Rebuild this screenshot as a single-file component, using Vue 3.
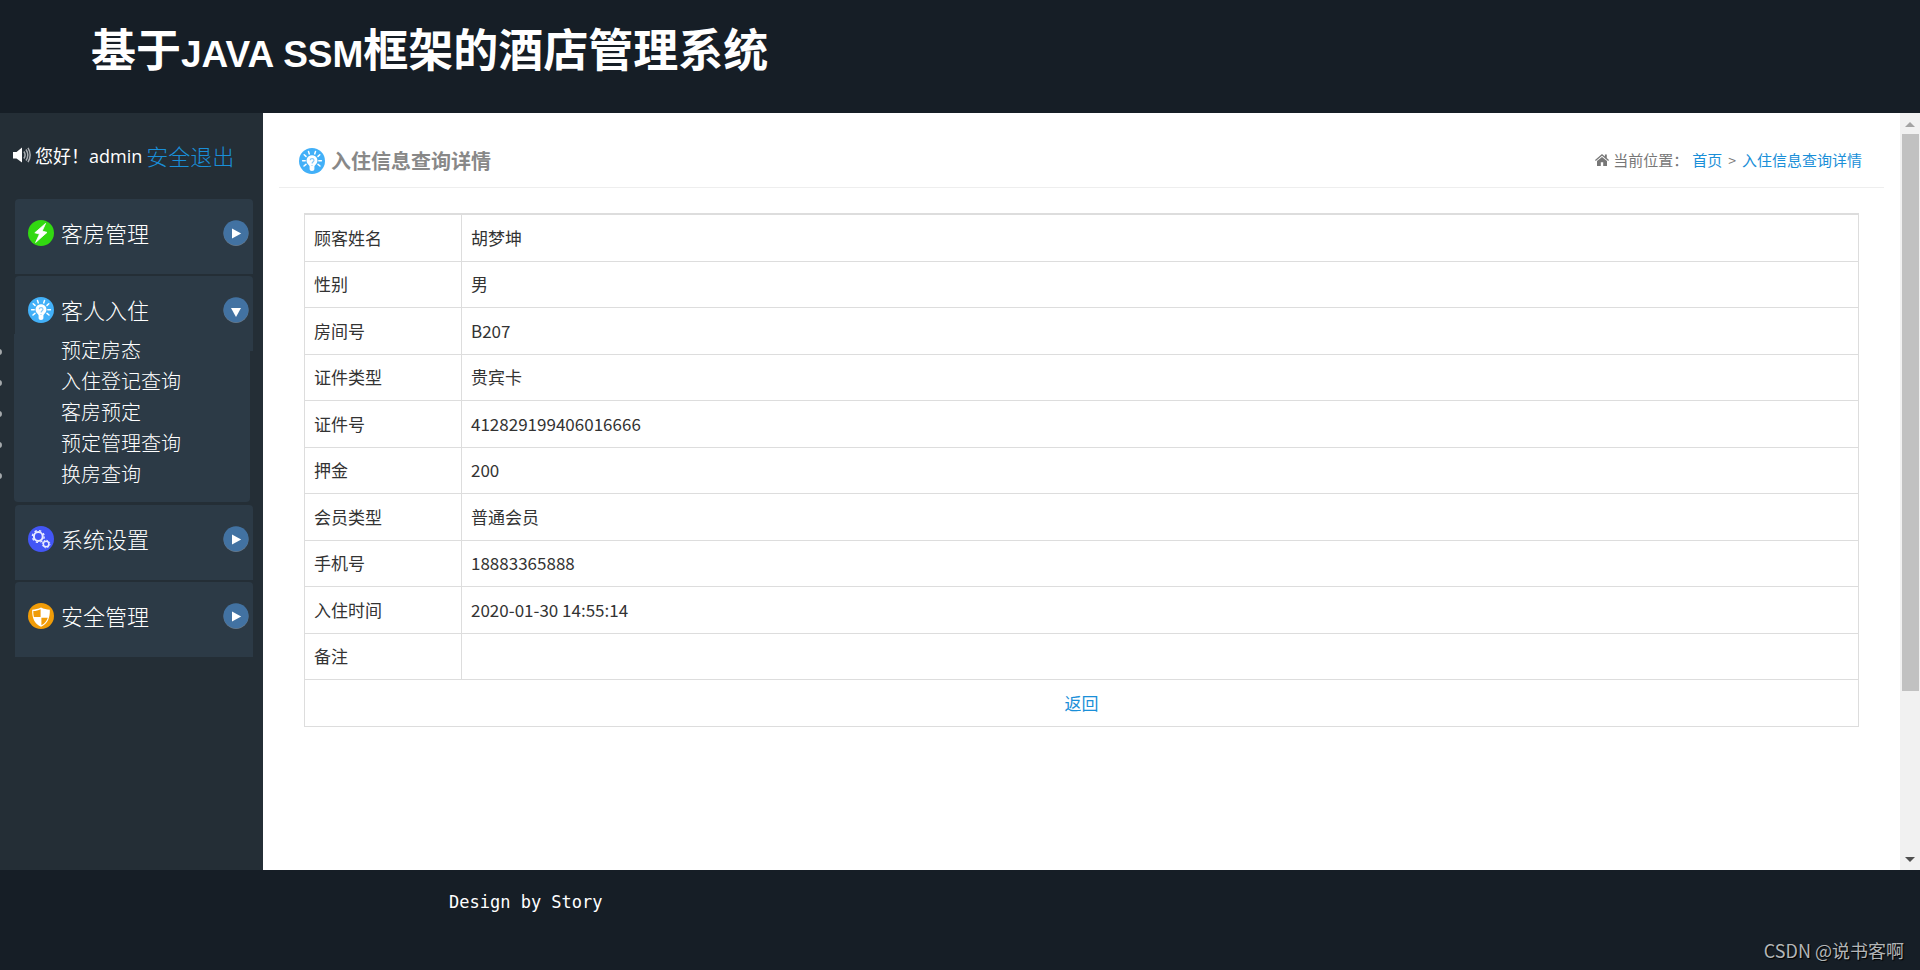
<script setup>
import { ref } from 'vue'

const open = ref('guest')

const menus = [
  { id: 'room', label: '客房管理', icon: 'bolt', children: [] },
  {
    id: 'guest',
    label: '客人入住',
    icon: 'bulb',
    children: ['预定房态', '入住登记查询', '客房预定', '预定管理查询', '换房查询'],
  },
  { id: 'system', label: '系统设置', icon: 'gears', children: [] },
  { id: 'security', label: '安全管理', icon: 'shield', children: [] },
]

const rows = [
  ['顾客姓名', '胡梦坤'],
  ['性别', '男'],
  ['房间号', 'B207'],
  ['证件类型', '贵宾卡'],
  ['证件号', '412829199406016666'],
  ['押金', '200'],
  ['会员类型', '普通会员'],
  ['手机号', '18883365888'],
  ['入住时间', '2020-01-30 14:55:14'],
  ['备注', ''],
]

const toggle = (id) => {
  open.value = open.value === id ? '' : id
}
</script>

<template>
  <div class="page">
    <svg class="defs" aria-hidden="true">
      <symbol id="i-bolt" viewBox="0 0 26 26">
        <circle cx="13" cy="13" r="13" fill="#32d911" />
        <path d="M17.600 3.400 6.800 12.800l4.700 1.300-3.900 8.400L19 12.400l-4.800-1.400z" fill="#fff" stroke="#fff" stroke-width=".8" stroke-linejoin="round" />
      </symbol>
      <symbol id="i-bulb" viewBox="0 0 26 26">
        <circle cx="13" cy="13" r="13" fill="#42b0f8" />
        <path d="M13 7.200a5.400 5.400 0 0 0-3.300 9.700c.7.6.9 1.100.9 1.900V21c0 1.200.9 2 2.400 2s2.400-.8 2.400-2v-2.200c0-.8.2-1.300.9-1.900A5.400 5.400 0 0 0 13 7.200z" fill="#fff" />
        <path d="M11.200 12.200c0-2.200 3.800-2.200 3.800 0 0 1.700-1.900 1.400-1.900 3.400M13 17.300v.8" fill="none" stroke="#86caf8" stroke-width="1.200" />
        <path d="M10.300 5.900 9.500 3.500M15.700 5.900l.8-2.400M7 8.400 5.200 6.800M19 8.400l1.800-1.600M6.200 12.800H3.600M19.800 12.800h2.600M7 16.400l-2 1.600M19 16.400l2 1.600" stroke="#fff" stroke-width="1.500" stroke-linecap="round" />
      </symbol>
      <symbol id="i-gears" viewBox="0 0 26 26">
        <circle cx="13" cy="13" r="13" fill="#4356f6" />
        <circle cx="10.300" cy="10.500" r="4.400" fill="none" stroke="#e9ebff" stroke-width="2" />
        <circle cx="10.300" cy="10.500" r="5.900" fill="none" stroke="#e9ebff" stroke-width="1.400" stroke-dasharray="2.320 2.320" />
        <circle cx="18.100" cy="18" r="2.800" fill="none" stroke="#e9ebff" stroke-width="1.500" />
        <circle cx="18.100" cy="18" r="3.800" fill="none" stroke="#e9ebff" stroke-width="1" stroke-dasharray="1.490 1.490" />
      </symbol>
      <symbol id="i-shield" viewBox="0 0 26 26">
        <circle cx="13" cy="13" r="13" fill="#f09c08" />
        <path d="M13 4.600c2.800 1.500 5.700 2.100 8.800 2.100.4 7.700-2.300 14.300-8.800 17-6.500-2.700-9.200-9.300-8.800-17 3.100 0 6-.6 8.800-2.100z" fill="#fff" />
        <path d="M12.600 6.200v7.900H5.900c-.5-1.900-.7-4.200-.6-6.100 2.600 0 5-.6 7.300-1.800zM13.400 14.700h6.400c-1.200 3.400-3.200 6-6.400 7.600z" fill="#f09c08" />
      </symbol>
    </svg>

    <header class="header">
      <h1 class="title">基于<span class="latin">JAVA SSM</span>框架的酒店管理系统</h1>
    </header>

    <div class="body">
      <aside class="sidebar">
        <div class="welcome">
          <svg class="sound" viewBox="0 0 18 16" aria-hidden="true">
            <path d="M0 5h3.500L9 .4v15.200L3.500 11.500H0z" fill="#fff" />
            <path d="M10.900 4.500q2.400 3.500 0 7M13 2.500q3.600 5.500 0 11M15 .8q4.300 7.200 0 14.400" fill="none" stroke="#a9adb1" stroke-width="1.500" />
          </svg>
          <span class="hello">您好！admin</span>
          <a class="logout" href="#">安全退出</a>
        </div>

        <nav class="menu">
          <section v-for="m in menus" :key="m.id" class="group">
            <button class="group-title" type="button" :aria-expanded="open === m.id" @click="toggle(m.id)">
              <svg class="icon" aria-hidden="true"><use :href="'#i-' + m.icon" /></svg>
              <span class="group-label">{{ m.label }}</span>
              <svg class="icon" viewBox="0 0 26 26" aria-hidden="true">
                <circle cx="13" cy="13.500" r="12.500" fill="#68798a" />
                <circle cx="13" cy="12.700" r="12.500" fill="#4272a2" />
                <path v-if="open === m.id" d="M8 11h10l-5 9z" fill="#fff" />
                <path v-else d="M9 8.500 18.200 13.500 9 18.500z" fill="#fff" />
              </svg>
            </button>
            <ul v-if="open === m.id && m.children.length" class="submenu">
              <li v-for="c in m.children" :key="c"><a href="#">{{ c }}</a></li>
            </ul>
          </section>
        </nav>
      </aside>

      <main class="content">
        <div class="content-head">
          <h2 class="heading">
            <svg class="icon" aria-hidden="true"><use href="#i-bulb" /></svg>
            入住信息查询详情
          </h2>
          <div class="crumbs">
            <svg class="home" viewBox="0 0 14 12" aria-hidden="true">
              <path d="M7 0 0 6l.8 1L7 1.800 13.200 7l.8-1-2.200-1.900V.6H9.900v1.900z" fill="#777" />
              <path d="M7 2.900 2 7.100V12h3.800V8.300h2.400V12H12V7.100z" fill="#777" />
            </svg>
            <span>当前位置：</span>
            <a href="#">首页</a>
            <span class="sep">&gt;</span>
            <a href="#">入住信息查询详情</a>
          </div>
        </div>

        <table class="detail">
          <tbody>
            <tr v-for="r in rows" :key="r[0]">
              <th scope="row">{{ r[0] }}</th>
              <td>{{ r[1] }}</td>
            </tr>
            <tr>
              <td class="back" colspan="2"><a href="#">返回</a></td>
            </tr>
          </tbody>
        </table>
      </main>

      <div class="scrollbar" aria-hidden="true">
        <span class="arrow up"></span>
        <div class="track"><div class="thumb"></div></div>
        <span class="arrow down"></span>
      </div>
    </div>

    <footer class="footer">
      <p class="design">Design by Story</p>
      <p class="mark">CSDN @说书客啊</p>
    </footer>
  </div>
</template>

<style>
body {
  margin: 0;
  background: #161e26;
}
</style>

<style scoped>
.page {
  display: flex;
  flex-direction: column;
  min-height: 100vh;
  font-family: "Noto Sans CJK SC", sans-serif;
  font-size: 17px;
  color: #333;
  background: #161e26;
}
.defs {
  position: absolute;
  width: 0;
  height: 0;
}
a {
  color: #1a8fd8;
  text-decoration: none;
}
.header {
  height: 113px;
  padding-left: 91px;
  box-sizing: border-box;
}
.title {
  margin: 0;
  padding-top: 16px;
  font-size: 45px;
  line-height: 64px;
  font-weight: 700;
  color: #fff;
}
.latin {
  font-family: "Liberation Sans", sans-serif;
  font-size: 37px;
}
.body {
  flex: 1;
  display: flex;
}
.sidebar {
  width: 263px;
  flex: none;
  box-sizing: border-box;
  padding: 26px 10px 0 15px;
  background: #242e36;
  color: #fff;
}
.welcome {
  display: flex;
  align-items: center;
  height: 32px;
  margin-left: -2px;
}
.sound {
  width: 18px;
  height: 16px;
  margin-right: 4px;
}
.hello {
  font-family: "Open Sans", "Noto Sans CJK SC", sans-serif;
  font-size: 18px;
}
.logout {
  margin-left: 4px;
  font-size: 22px;
  font-weight: 300;
  line-height: 32px;
}
.menu {
  display: flex;
  flex-direction: column;
  gap: 2px;
  margin-top: 28px;
}
.group-title {
  display: flex;
  align-items: flex-start;
  width: 100%;
  height: 75px;
  padding: 21px 4px 0 13px;
  border: 0;
  border-radius: 4px 4px 0 0;
  background: #2c3a46;
  color: #fff;
  font-family: inherit;
  font-size: 22px;
  font-weight: 300;
  line-height: 24px;
  text-align: left;
  cursor: pointer;
}
.icon {
  width: 26px;
  height: 26px;
  flex: none;
}
.group-label {
  flex: 1;
  margin-left: 7px;
}
.submenu {
  margin: -17px 3px 1px -1px;
  padding: 0 0 13px 47px;
  border-radius: 0 0 4px 4px;
  background: #2c3a46;
  list-style: none;
  position: relative;
}
.submenu li {
  font-size: 20px;
  font-weight: 300;
  line-height: 31px;
}
.submenu li::before {
  content: "";
  position: absolute;
  left: -18px;
  width: 6px;
  height: 6px;
  margin-top: 15px;
  border-radius: 50%;
  background: #a5a9ac;
}
.submenu a {
  color: #fff;
}
.content {
  flex: 1;
  min-width: 0;
  padding: 21px 16px 0;
  background: #fff;
}
.content-head {
  display: flex;
  justify-content: space-between;
  align-items: center;
  height: 53px;
  padding: 0 22px 0 20px;
  border-bottom: 1px solid #eee;
}
.heading {
  display: flex;
  align-items: center;
  gap: 6px;
  margin: 0;
  font-size: 20px;
  font-weight: 700;
  color: #888;
}
.crumbs {
  display: flex;
  align-items: center;
  padding-bottom: 2px;
  font-size: 15px;
  color: #777;
}
.home {
  width: 14px;
  height: 12px;
  margin-right: 4px;
}
.crumbs a {
  margin-left: 4px;
}
.sep {
  margin: 0 2px 0 6px;
  font-size: 14px;
}
.detail {
  width: calc(100% - 50px);
  margin: 25px 25px 0;
  border-collapse: collapse;
  border: 1px solid #ddd;
  border-top-width: 2px;
}
.detail tr {
  height: 46px;
}
.detail tr:nth-child(odd) {
  height: 47px;
}
.detail th,
.detail td {
  padding: 0 9px;
  border: 1px solid #ddd;
  font-weight: 400;
  line-height: 24px;
  text-align: left;
}
.detail tr:first-child > * {
  border-top-width: 2px;
}
.detail th {
  width: 138px;
}
.detail .back {
  text-align: center;
}
.scrollbar {
  display: flex;
  flex-direction: column;
  align-items: center;
  width: 20px;
  flex: none;
  background: #f1f1f1;
}
.track {
  flex: 1;
  width: 17px;
  margin: 7px 0 0 1px;
}
.thumb {
  height: 77%;
  background: #c1c1c1;
}
.arrow {
  border: 5px solid transparent;
}
.up {
  margin-top: 9px;
  border-top-width: 0;
  border-bottom-color: #a3a3a3;
}
.down {
  margin-bottom: 8px;
  border-bottom-width: 0;
  border-top-color: #505050;
}
.footer {
  display: flex;
  justify-content: space-between;
  align-items: flex-end;
  height: 100px;
  box-sizing: border-box;
  padding: 20px 16px 7px 449px;
}
.footer p {
  margin: 0;
}
.design {
  align-self: flex-start;
  font-family: "DejaVu Sans Mono", monospace;
  font-size: 17px;
  line-height: 24px;
  color: #fff;
}
.mark {
  font-size: 18px;
  line-height: 26px;
  color: #b3b6b8;
  text-shadow: 1px 1px 1px #000;
}
</style>
